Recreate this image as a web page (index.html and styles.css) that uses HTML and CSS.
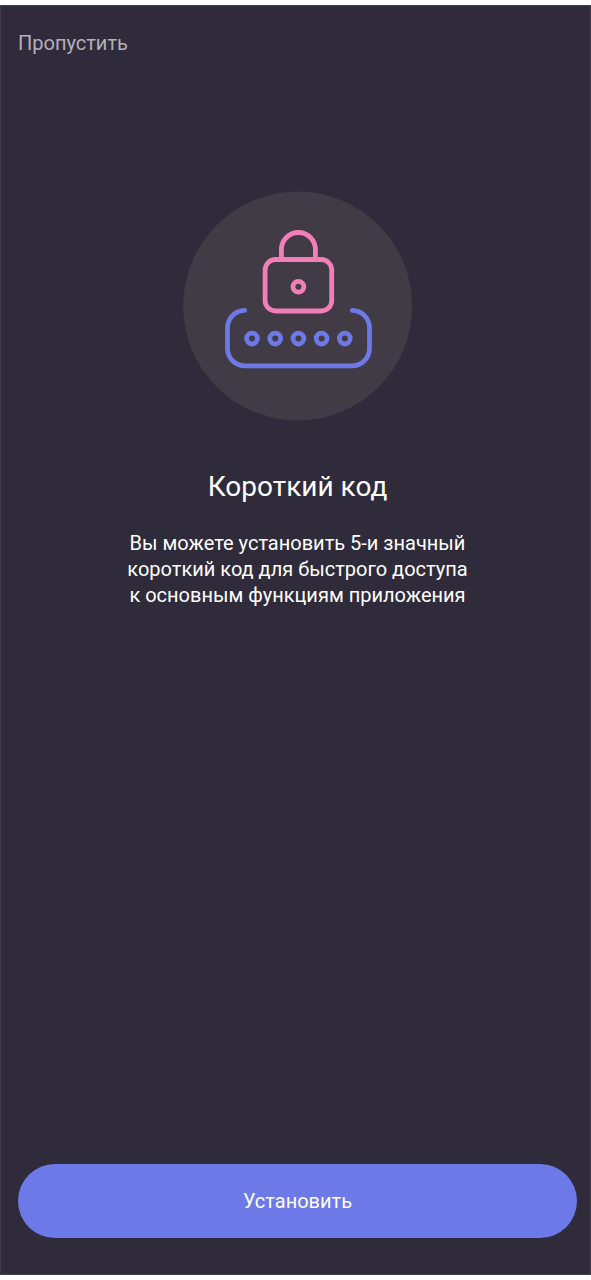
FILE: index.html
```html
<!DOCTYPE html>
<html lang="ru">
<head>
<meta charset="utf-8">
<meta name="viewport" content="width=device-width, initial-scale=1">
<title>Короткий код</title>
<link rel="stylesheet" href="styles.css">
</head>
<body>
<div class="screen">
  <header class="topbar">
    <button class="skip" type="button">Пропустить</button>
  </header>
  <main class="intro">
    <svg class="badge" viewBox="0 0 230 230" fill="none" aria-hidden="true">
      <circle cx="114.7" cy="115" r="114.5" fill="#413b46"/>
      <g stroke="#6c79e6" stroke-width="4.8" stroke-linecap="round">
        <path d="M61.7 119.4A17.4 17.4 0 0 0 44.5 136.8V157.5A17.4 17.4 0 0 0 61.9 174.9H169.1A17.4 17.4 0 0 0 186.5 157.5V136.8A17.4 17.4 0 0 0 169.3 119.4"/>
        <circle cx="69" cy="147.6" r="5.4"/>
        <circle cx="92.2" cy="147.6" r="5.4"/>
        <circle cx="115.4" cy="147.6" r="5.4"/>
        <circle cx="138.6" cy="147.6" r="5.4"/>
        <circle cx="161.8" cy="147.6" r="5.4"/>
      </g>
      <g stroke="#f27fb8" stroke-width="4.8">
        <rect x="82.1" y="68.5" width="66.6" height="51.5" rx="10.5"/>
        <path d="M98.4 68.5V58.5a17 17 0 0 1 34 0V68.5"/>
        <circle cx="115.4" cy="95.8" r="5.4"/>
      </g>
    </svg>
    <h1 class="title">Короткий код</h1>
    <p class="text">Вы можете установить 5-и значный<br>короткий код для быстрого доступа<br>к основным функциям приложения</p>
  </main>
  <footer class="actions">
    <button class="primary" type="button">Установить</button>
  </footer>
</div>
</body>
</html>
```
FILE: styles.css
```css
* {
  box-sizing: border-box;
}

body {
  margin: 0;
  padding: 5px 0;
  min-height: 100vh;
  display: flex;
  background: #fff;
  color: #fff;
  font-family: Roboto, "Open Sans", sans-serif;
}

.screen {
  flex: 1;
  display: flex;
  flex-direction: column;
  padding: 24px 13px 36px 17px;
  background: #302b3a;
  border: 1px solid #403c48;
}

.topbar {
  display: flex;
}

button {
  border: 0;
  font-family: inherit;
  font-size: 20px;
  line-height: 26px;
  cursor: pointer;
}

.skip {
  padding: 0;
  background: none;
  color: #b5afbb;
}

.intro {
  flex: 1;
  display: flex;
  flex-direction: column;
  align-items: center;
  padding-top: 135px;
  text-align: center;
}

.badge {
  width: 230px;
  height: 230px;
}

.title {
  margin: 48px 0 0;
  font-size: 28px;
  font-weight: 400;
  line-height: 36px;
}

.text {
  margin: 25px 0 0;
  font-size: 20px;
  line-height: 26px;
}

.actions {
  display: flex;
}

.primary {
  flex: 1;
  padding: 24px;
  border-radius: 37px;
  background: #6c79e6;
  color: #fff;
}
```
